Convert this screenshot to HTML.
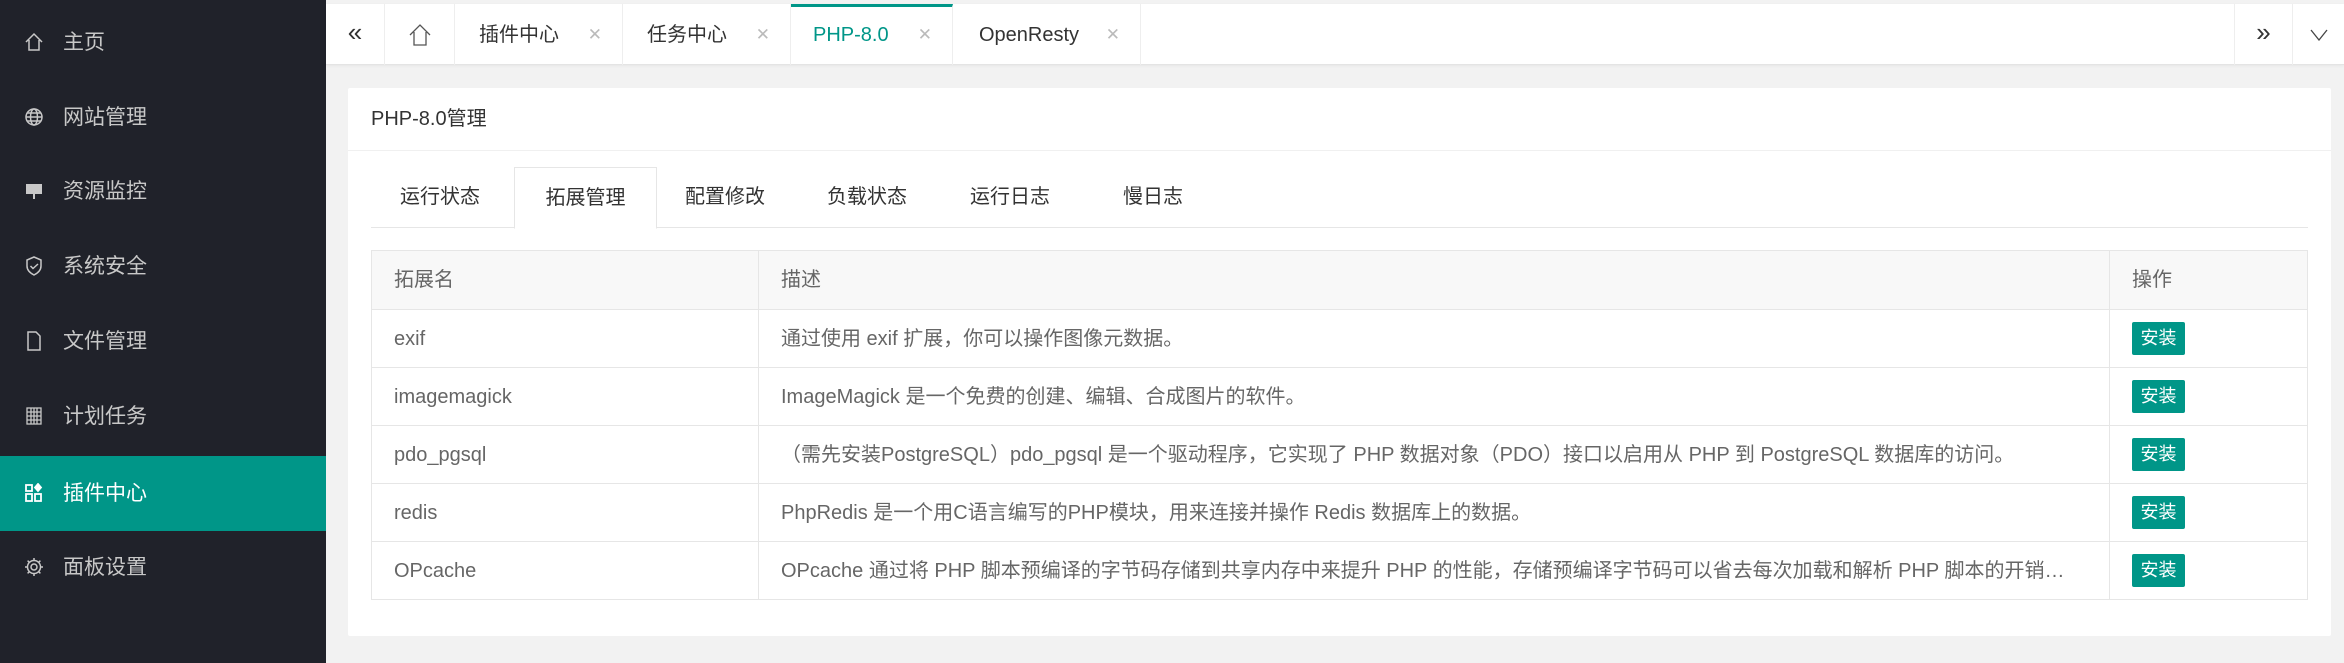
<!DOCTYPE html>
<html><head><meta charset="utf-8"><style>
*{margin:0;padding:0;box-sizing:border-box}
body{width:2344px;height:663px;overflow:hidden;background:#f2f2f2;font-family:"Liberation Sans","Noto Sans CJK SC",sans-serif;position:relative}
.side{position:absolute;left:0;top:0;width:326px;height:663px;background:#20222a}
.si{position:absolute;left:0;width:326px;height:75px;color:#c8c8c8;font-size:21px;line-height:75px;padding-left:63px}
.si svg{position:absolute;left:24px;top:27px}
.si.act{background:#009688;color:#fff}
.top{position:absolute;left:326px;top:4px;width:2018px;height:61px;background:#fff;border-bottom:1px solid #e4e4e4;box-shadow:0 1px 3px rgba(0,0,0,.05)}
.tb{position:absolute;top:0;height:61px;border-right:1px solid #eee;font-size:20px;color:#333;line-height:62px}
.tb .x{position:absolute;right:20px;color:#bbb;font-size:17px}
.card{position:absolute;left:348px;top:88px;width:1983px;height:548px;background:#fff;border-radius:2px}
.hd{height:63px;border-bottom:1px solid #f0f0f0;font-size:20px;color:#333;line-height:63px;padding-left:23px}
.tabs{position:absolute;left:23px;top:79px;width:1937px;height:61px;border-bottom:1px solid #e6e6e6}
.tab{position:absolute;top:0;height:61px;line-height:61px;font-size:20px;color:#333}
.tab.a{background:#fff;border:1px solid #e6e6e6;border-bottom:1px solid #fff;height:62px;width:143px;left:143px;text-align:center}
table{position:absolute;left:23px;top:162px;width:1937px;border-collapse:collapse;font-size:20px;color:#666;table-layout:fixed}
td,th{border:1px solid #e6e6e6;height:58px;line-height:28px;padding:0 0 0 22px;text-align:left;font-weight:normal;white-space:nowrap;vertical-align:middle;overflow:hidden}
th{background:#f8f8f8;height:59px}
.btn{display:inline-block;vertical-align:middle;background:#009688;color:#fff;font-size:18px;width:53px;height:33px;line-height:33px;text-align:center;border-radius:2px}
.el{width:1285px;overflow:hidden;text-overflow:ellipsis;white-space:nowrap}
</style></head><body>
<div class="side">
<div class="si" style="top:5px"><svg width="20" height="20" viewBox="0 0 20 20" fill="none" stroke="#c8c8c8" stroke-width="1.5"><path d="M2 10L10 2l8 8M5 8v10h10V8"/></svg>主页</div>
<div class="si" style="top:80px"><svg width="20" height="20" viewBox="0 0 20 20" fill="none" stroke="#c8c8c8" stroke-width="1.5"><circle cx="10" cy="10" r="8"/><ellipse cx="10" cy="10" rx="3.5" ry="8"/><path d="M2 10h16M3.5 6h13M3.5 14h13"/></svg>网站管理</div>
<div class="si" style="top:154px"><svg width="20" height="20" viewBox="0 0 20 20" fill="#c8c8c8"><rect x="2" y="3" width="16" height="10"/><path d="M9 13h2v5H9z"/></svg>资源监控</div>
<div class="si" style="top:229px"><svg width="20" height="20" viewBox="0 0 20 20" fill="none" stroke="#c8c8c8" stroke-width="1.5"><path d="M10 1l7 3v6c0 4-3 7-7 9c-4-2-7-5-7-9V4z"/><path d="M6.5 10l2.5 2.5L14 8"/></svg>系统安全</div>
<div class="si" style="top:304px"><svg width="20" height="20" viewBox="0 0 20 20" fill="none" stroke="#c8c8c8" stroke-width="1.5"><path d="M4 1h8l4 4v14H4z"/></svg>文件管理</div>
<div class="si" style="top:379px"><svg width="20" height="20" viewBox="0 0 20 20" fill="none" stroke="#c8c8c8" stroke-width="1.3"><rect x="3" y="2" width="14" height="16"/><path d="M3 6h14M3 10h14M3 14h14M7 2v16M10 2v16M13 2v16"/></svg>计划任务</div>
<div class="si act" style="top:456px"><svg width="20" height="20" viewBox="0 0 20 20" fill="none" stroke="#fff" stroke-width="1.8"><rect x="2" y="2" width="6" height="6"/><rect x="2" y="11" width="6" height="7"/><rect x="11" y="11" width="6" height="7"/><path d="M14 1l3 3.5-3 3.5-3-3.5z" fill="#fff"/></svg>插件中心</div>
<div class="si" style="top:530px"><svg width="20" height="20" viewBox="0 0 20 20" fill="none" stroke="#c8c8c8" stroke-width="1.5"><circle cx="10" cy="10" r="3"/><path d="M10 1v3M10 16v3M1 10h3M16 10h3M3.6 3.6l2.1 2.1M14.3 14.3l2.1 2.1M3.6 16.4l2.1-2.1M14.3 5.7l2.1-2.1"/><circle cx="10" cy="10" r="6.5"/></svg>面板设置</div>
</div>
<div class="top">
<div class="tb" style="left:0;width:59px;text-align:center;font-size:26px;line-height:56px">«</div>
<div class="tb" style="left:59px;width:70px"><svg style="position:absolute;left:24px;top:20px" width="22" height="22" viewBox="0 0 22 22" fill="none" stroke="#555" stroke-width="1.3"><path d="M1 11L11 1l10 10M5 8v13h12V8"/></svg></div>
<div class="tb" style="left:129px;width:168px;padding-left:24px">插件中心<span class="x">✕</span></div>
<div class="tb" style="left:297px;width:168px;padding-left:24px">任务中心<span class="x">✕</span></div>
<div class="tb" style="left:465px;width:162px;padding-left:22px;color:#009688;border-top:3px solid #009688;line-height:56px;top:0">PHP-8.0<span class="x" style="line-height:56px">✕</span></div>
<div class="tb" style="left:627px;width:188px;padding-left:26px">OpenResty<span class="x">✕</span></div>
<div class="tb" style="left:1908px;width:59px;border-left:1px solid #eee;text-align:center;font-size:26px;line-height:56px">»</div>
<div class="tb" style="left:1967px;width:51px;border-right:none;text-align:center"><svg style="position:absolute;left:17px;top:25px" width="18" height="12" viewBox="0 0 18 12" fill="none" stroke="#444" stroke-width="1.3"><path d="M1 1l8 10 8-10"/></svg></div>
</div>
<div class="card">
<div class="hd">PHP-8.0管理</div>
<div class="tabs">
<div class="tab" style="left:29px">运行状态</div>
<div class="tab a">拓展管理</div>
<div class="tab" style="left:314px">配置修改</div>
<div class="tab" style="left:456px">负载状态</div>
<div class="tab" style="left:599px">运行日志</div>
<div class="tab" style="left:752px">慢日志</div>
</div>
<table>
<colgroup><col style="width:387px"><col style="width:1351px"><col></colgroup>
<tr><th>拓展名</th><th>描述</th><th>操作</th></tr>
<tr><td>exif</td><td>通过使用 exif 扩展，你可以操作图像元数据。</td><td><span class="btn">安装</span></td></tr>
<tr><td>imagemagick</td><td>ImageMagick 是一个免费的创建、编辑、合成图片的软件。</td><td><span class="btn">安装</span></td></tr>
<tr><td>pdo_pgsql</td><td>（需先安装PostgreSQL）pdo_pgsql 是一个驱动程序，它实现了 PHP 数据对象（PDO）接口以启用从 PHP 到 PostgreSQL 数据库的访问。</td><td><span class="btn">安装</span></td></tr>
<tr><td>redis</td><td>PhpRedis 是一个用C语言编写的PHP模块，用来连接并操作 Redis 数据库上的数据。</td><td><span class="btn">安装</span></td></tr>
<tr><td>OPcache</td><td><div class="el">OPcache 通过将 PHP 脚本预编译的字节码存储到共享内存中来提升 PHP 的性能，存储预编译字节码可以省去每次加载和解析 PHP 脚本的开销，从而提升运行效率。</div></td><td><span class="btn">安装</span></td></tr>
</table>
</div>
</body></html>
